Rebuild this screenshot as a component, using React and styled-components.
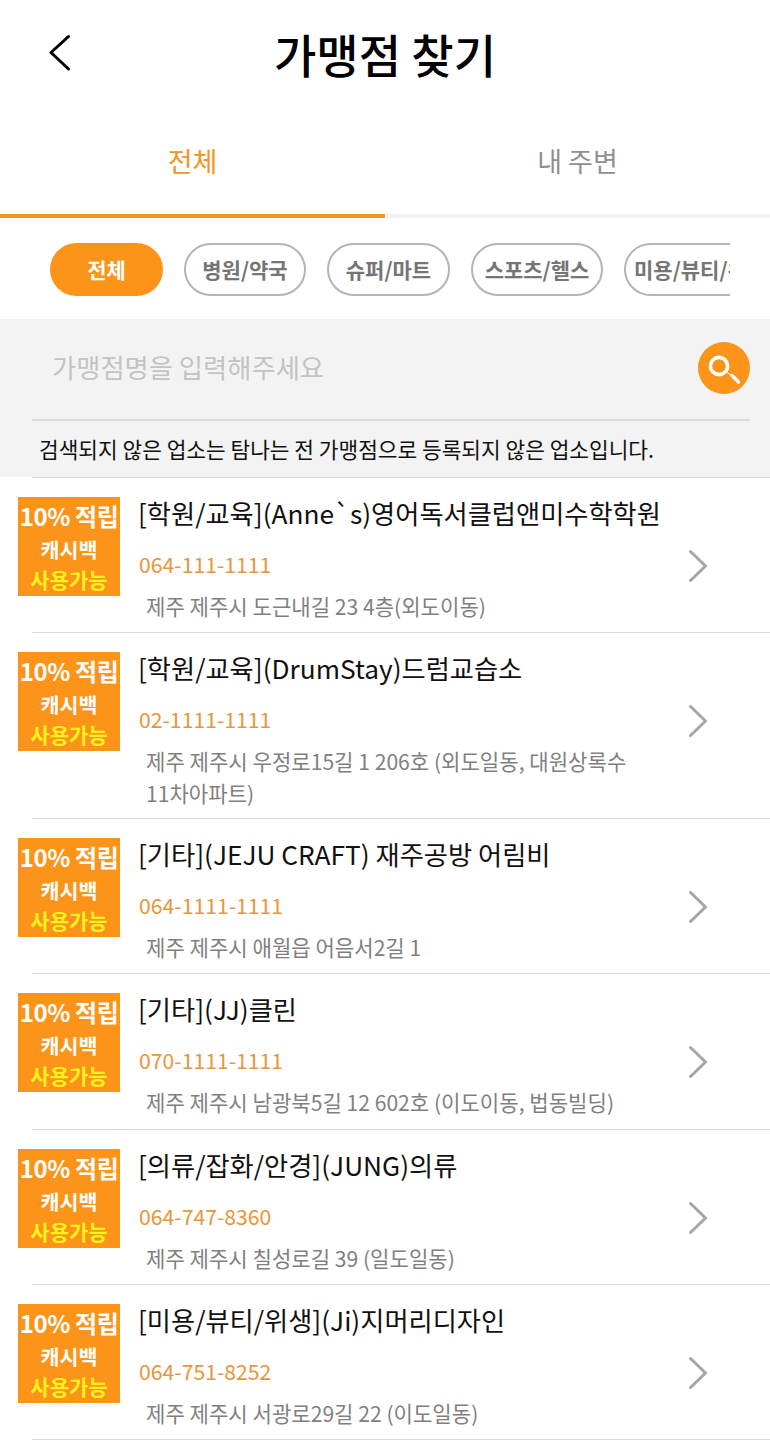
import React from "react";
import styled, { createGlobalStyle } from "styled-components";

const Global = createGlobalStyle`
  html, body { margin: 0; padding: 0; background: #fff; }
  body { font-family: "Noto Sans CJK KR", "Noto Sans", sans-serif; }
  * { box-sizing: border-box; }
`;
const Page = styled.div`width: 770px; height: 1440px; overflow: hidden; background: #fff;`;
const Header = styled.header`position: relative; height: 108px; display: flex; align-items: center; justify-content: center; padding-bottom: 3px;`;
const Title = styled.h1`margin: 0; font-size: 46px; font-weight: 500; color: #000; line-height: 1; letter-spacing: 0;`;
const Back = styled.svg`position: absolute; left: 48px; top: 34px; width: 24px; height: 37px;`;
const Tabs = styled.nav`display: flex; height: 110px;`;
const Tab = styled.div`
  width: 50%; display: flex; align-items: center; justify-content: center; padding-bottom: 2px;
  font-size: 27px; line-height: 1; color: ${p => (p.$active ? "#f39325" : "#8f8f8f")};
  border-bottom: 4px solid ${p => (p.$active ? "#f79420" : "#f3f3f3")};
`;
const Chips = styled.div`display: flex; gap: 21px; height: 101px; padding: 25px 40px 23px 50px; overflow: hidden;`;
const Chip = styled.div`
  flex: none; width: ${p => p.$w}px; height: 53px; border-radius: 27px; display: flex; align-items: center;
  justify-content: ${p => (p.$clip ? "flex-start" : "center")}; padding-left: ${p => (p.$clip ? "8px" : "0")};
  font-size: 21px; font-weight: 700; line-height: 1; white-space: nowrap; overflow: hidden;
  color: ${p => (p.$active ? "#fff" : "#757575")};
  background: ${p => (p.$active ? "#fb9419" : "#fff")};
  border: ${p => (p.$active ? "none" : "2px solid #b4b4b4")};
  ${p => p.$clip && "border-right: none; border-radius: 27px 0 0 27px;"}
`;
const SearchPanel = styled.section`height: 158px; background: #f3f3f3; padding: 0 20px 0 32px;`;
const SearchRow = styled.div`height: 102px; display: flex; align-items: center; justify-content: space-between; padding: 0 0 3px 20px; border-bottom: 2px solid #dcdcdc;`;
const Placeholder = styled.div`font-size: 26.3px; line-height: 1; color: #c3c3c3;`;
const SearchBtn = styled.div`width: 52px; height: 52px; border-radius: 50%; background: #fb9419; display: flex; align-items: center; justify-content: center;`;
const Note = styled.p`margin: 0; height: 56px; display: flex; align-items: center; padding-left: 7px; font-size: 21.4px; line-height: 1; color: #111;`;
const Divider = styled.div`height: 1px; margin-left: 32px; background: #d9d9d9;`;
const Row = styled.article`display: flex; padding: 19px 0 0 18px; height: ${p => p.$h}px;`;
const Badge = styled.div`
  flex: none; width: 102px; height: 99px; background: #fb9419; color: #fff; font-weight: 700;
  display: flex; flex-direction: column; align-items: center; padding-top: 4px;
  white-space: nowrap; line-height: 30px;
`;
const BadgeTop = styled.span`font-size: 24px; letter-spacing: -0.4px;`;
const BadgeMid = styled.span`margin-top: 3px; font-size: 20.6px;`;
const BadgeLow = styled.span`font-size: 21px; color: #fff21f;`;
const Body = styled.div`flex: none; width: 549px; margin-left: 18px; display: flex; flex-direction: column;`;
const Name = styled.div`margin-top: -1px; font-size: 26.25px; line-height: 34px; color: #111; white-space: nowrap;`;
const Phone = styled.div`margin: 19px 0 0 1px; font-size: 21.2px; line-height: 30px; color: #e8963a;`;
const Address = styled.div`margin: 11px 0 0 8px; font-size: 21.1px; line-height: 32px; color: #808080; width: 490px; word-break: keep-all;`;
const Chevron = styled.svg`flex: none; width: 20px; height: 34px; margin: 52px 0 0 2px;`;

const stores = [
  ["[학원/교육](Anne`s)영어독서클럽앤미수학학원", "064-111-1111", "제주 제주시 도근내길 23 4층(외도이동)", 154],
  ["[학원/교육](DrumStay)드럼교습소", "02-1111-1111", "제주 제주시 우정로15길 1 206호 (외도일동, 대원상록수 11차아파트)", 185],
  ["[기타](JEJU CRAFT) 재주공방 어림비", "064-1111-1111", "제주 제주시 애월읍 어음서2길 1", 154],
  ["[기타](JJ)클린", "070-1111-1111", "제주 제주시 남광북5길 12 602호 (이도이동, 법동빌딩)", 155],
  ["[의류/잡화/안경](JUNG)의류", "064-747-8360", "제주 제주시 칠성로길 39 (일도일동)", 154],
  ["[미용/뷰티/위생](Ji)지머리디자인", "064-751-8252", "제주 제주시 서광로29길 22 (이도일동)", 154],
];

export default function App() {
  return (
    <Page>
      <Global />
      <Header>
        <Back viewBox="0 0 24 37" fill="none">
          <path d="M20.5 2.5 L3 18.5 L20.5 35" stroke="#000" strokeWidth="3" strokeLinecap="round" strokeLinejoin="round" />
        </Back>
        <Title>가맹점 찾기</Title>
      </Header>
      <Tabs>
        <Tab $active>전체</Tab>
        <Tab>내 주변</Tab>
      </Tabs>
      <Chips>
        <Chip $active $w={113}>전체</Chip>
        <Chip $w={122}>병원/약국</Chip>
        <Chip $w={123}>슈퍼/마트</Chip>
        <Chip $w={132}>스포츠/헬스</Chip>
        <Chip $clip $w={106}>미용/뷰티/위생</Chip>
      </Chips>
      <SearchPanel>
        <SearchRow>
          <Placeholder>가맹점명을 입력해주세요</Placeholder>
          <SearchBtn>
            <svg width="36" height="36" viewBox="0 0 36 36" fill="none">
              <circle cx="13" cy="16" r="8.6" stroke="#fff" strokeWidth="3.6" />
              <path d="M20 22 L26 25.5" stroke="#fff" strokeWidth="1" />
              <path d="M26 25.5 L32.5 32" stroke="#fff" strokeWidth="3.4" strokeLinecap="round" />
            </svg>
          </SearchBtn>
        </SearchRow>
        <Note>검색되지 않은 업소는 탐나는 전 가맹점으로 등록되지 않은 업소입니다.</Note>
      </SearchPanel>
      <Divider />
      {stores.map(([name, phone, addr, h]) => (
        <React.Fragment key={name}>
          <Row $h={h}>
            <Badge>
              <BadgeTop>10% 적립</BadgeTop>
              <BadgeMid>캐시백</BadgeMid>
              <BadgeLow>사용가능</BadgeLow>
            </Badge>
            <Body>
              <Name>{name}</Name>
              <Phone>{phone}</Phone>
              <Address>{addr}</Address>
            </Body>
            <Chevron viewBox="0 0 20 34" fill="none">
              <path d="M1.5 2.5 L16.5 17 L1.5 31.5" stroke="#a6a6a6" strokeWidth="3" strokeLinecap="round" strokeLinejoin="round" />
            </Chevron>
          </Row>
          <Divider />
        </React.Fragment>
      ))}
    </Page>
  );
}
